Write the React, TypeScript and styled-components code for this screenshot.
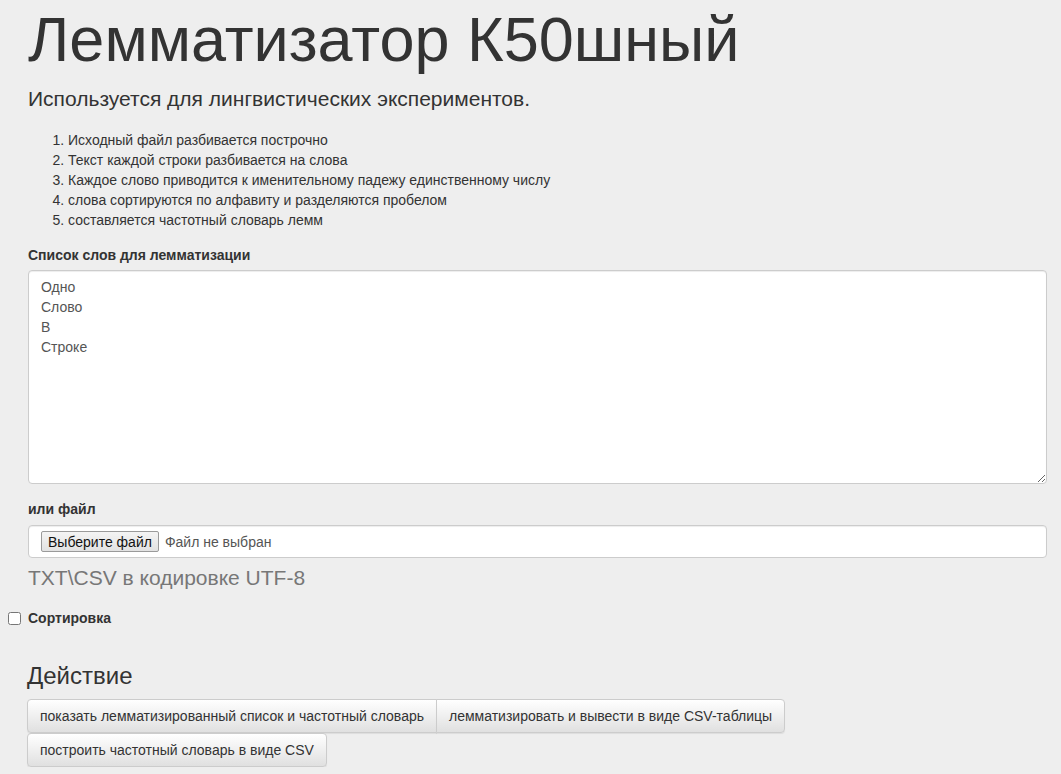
import React from "react";
import styled, { createGlobalStyle } from "styled-components";

const Global = createGlobalStyle`
  html, body { margin: 0; padding: 0; background: #eeeeee; }
  body {
    font-family: "Liberation Sans", Arial, Helvetica, sans-serif;
    font-size: 14px;
    line-height: 20px;
    color: #333333;
  }
  * { box-sizing: border-box; }
`;

const Page = styled.div`
  padding: 0 14px 0 28px;
`;

const Title = styled.h1`
  margin: 5px 0 0 0;
  font-size: 63px;
  font-weight: 400;
  line-height: 1.1;
  color: #333;
`;

const Lead = styled.h4`
  margin: 14px 0 0 0;
  font-size: 21px;
  font-weight: 400;
  line-height: 22px;
`;

const Steps = styled.ol`
  margin: 20px 0 0 0;
  padding-left: 40px;
  font-size: 14px;
  line-height: 20px;
`;

const Label = styled.label<{ $top: number; $bottom: number }>`
  display: block;
  margin-top: ${(p) => p.$top}px;
  margin-bottom: ${(p) => p.$bottom}px;
  font-size: 14px;
  font-weight: 700;
  line-height: 20px;
`;

const TextArea = styled.textarea`
  display: block;
  width: 100%;
  height: 214px;
  padding: 6px 12px;
  font-family: inherit;
  font-size: 14px;
  line-height: 20px;
  color: #555;
  background: #fff;
  border: 1px solid #ccc;
  border-radius: 4px;
  box-shadow: inset 0 1px 1px rgba(0, 0, 0, 0.075);
  resize: vertical;
  outline: none;
`;

const FileBox = styled.div`
  display: flex;
  align-items: center;
  gap: 6px;
  height: 33px;
  padding: 0 12px;
  background: #fff;
  border: 1px solid #ccc;
  border-radius: 4px;
  box-shadow: inset 0 1px 1px rgba(0, 0, 0, 0.075);
  font-size: 14px;
  color: #555;
`;

const FileButton = styled.button`
  height: 21px;
  padding: 0 6px;
  font-family: inherit;
  font-size: 14px;
  color: #111;
  background: linear-gradient(#f4f4f4, #e2e2e2);
  border: 1px solid #9a9a9a;
  border-radius: 2px;
`;

const Help = styled.div`
  margin-top: 8px;
  font-size: 21px;
  line-height: 24px;
  color: #777;
`;

const CheckRow = styled.label`
  display: flex;
  align-items: center;
  margin: 18px 0 0 -20px;
  font-size: 14px;
  font-weight: 700;
  line-height: 20px;
`;

const Check = styled.input`
  width: 13px;
  height: 13px;
  margin: 0 7px 0 0;
`;

const Section = styled.h3`
  margin: 35px 0 0 -1px;
  font-size: 24px;
  font-weight: 400;
  line-height: 26px;
`;

const Buttons = styled.div`
  display: flex;
  flex-wrap: wrap;
  margin: 10px 0 0 -1px;
  max-width: 770px;
`;

const Btn = styled.button<{ $pos: "first" | "last" | "single" }>`
  height: 34px;
  padding: 6px 12px;
  font-family: inherit;
  font-size: 14px;
  line-height: 20px;
  color: #333;
  background: linear-gradient(#ffffff 0%, #e0e0e0 100%);
  border: 1px solid #ccc;
  box-shadow: inset 0 1px 0 rgba(255, 255, 255, 0.15), 0 1px 1px rgba(0, 0, 0, 0.075);
  border-radius: ${(p) =>
    p.$pos === "first" ? "4px 0 0 4px" : p.$pos === "last" ? "0 4px 4px 0" : "4px"};
  margin-left: ${(p) => (p.$pos === "last" ? "-1px" : "0")};
  cursor: pointer;
`;

const Break = styled.div`
  flex-basis: 100%;
  height: 0;
`;

export default function App() {
  return (
    <>
      <Global />
      <Page>
        <Title>Лемматизатор К50шный</Title>
        <Lead>Используется для лингвистических экспериментов.</Lead>
        <Steps>
          <li>Исходный файл разбивается построчно</li>
          <li>Текст каждой строки разбивается на слова</li>
          <li>Каждое слово приводится к именительному падежу единственному числу</li>
          <li>слова сортируются по алфавиту и разделяются пробелом</li>
          <li>составляется частотный словарь лемм</li>
        </Steps>
        <Label $top={15} $bottom={5}>Список слов для лемматизации</Label>
        <TextArea defaultValue={"Одно\nСлово\nВ\nСтроке"} />
        <Label $top={15} $bottom={6}>или файл</Label>
        <FileBox>
          <FileButton>Выберите файл</FileButton>
          <span>Файл не выбран</span>
        </FileBox>
        <Help>TXT\CSV в кодировке UTF-8</Help>
        <CheckRow>
          <Check type="checkbox" />
          Сортировка
        </CheckRow>
        <Section>Действие</Section>
        <Buttons>
          <Btn $pos="first">показать лемматизированный список и частотный словарь</Btn>
          <Btn $pos="last">лемматизировать и вывести в виде CSV-таблицы</Btn>
          <Break />
          <Btn $pos="single">построить частотный словарь в виде CSV</Btn>
        </Buttons>
      </Page>
    </>
  );
}
